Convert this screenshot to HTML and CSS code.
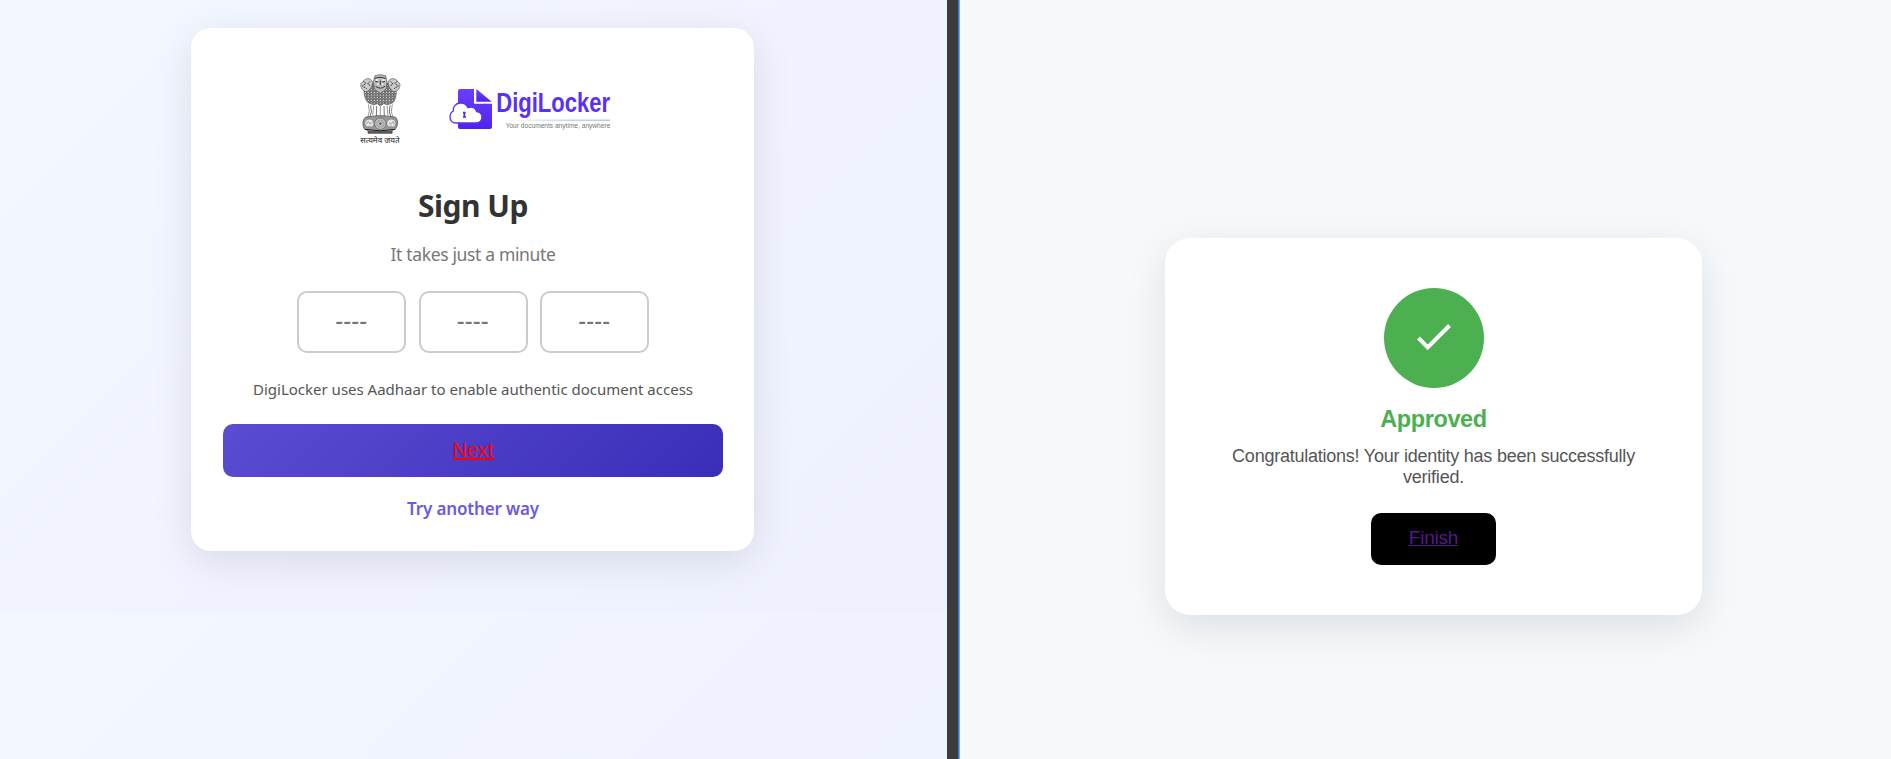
FILE: index.html
```html
<!DOCTYPE html>
<html lang="en">
<head>
<meta charset="utf-8">
<title>DigiLocker Sign Up</title>
<link rel="stylesheet" href="styles.css">
</head>
<body>
<main class="split">
  <section class="pane pane-signup">
    <div class="card signup">
      <div class="logos">
        <svg class="emblem" viewBox="0 0 240 270" role="img" aria-label="National emblem">
          <defs>
            <pattern id="fur" width="9" height="8" patternUnits="userSpaceOnUse">
              <rect width="9" height="8" fill="#999"/>
              <path d="M0 0l4 5 5-5M0 8l4-3M5 5l4 3" stroke="#333" stroke-width="1.5" fill="none"/>
              <circle cx="4" cy="1" r="1.8" fill="#eee"/>
            </pattern>
          </defs>
          <g stroke="#555" stroke-width="2">
            <path fill="url(#fur)" d="M74 78c-4 16-2 36 10 50l16 6 12-3 9 7 10-7 12 3 16-6c11-14 12-34 7-50l-18-8H92z"/>
            <path fill="#ccc" d="M82 56c-8 1-10 6-15 10-6 5-6 12-3 16 1 8 9 13 17 13 9-5 16-15 17-28-3-8-9-12-16-11zM160 56c8 1 10 6 15 10 6 5 6 12 3 16-1 8-9 13-17 13-9-5-16-15-17-28 3-8 9-12 16-11z"/>
            <path fill="#bbb" d="M105 47q16-6 32 0l4 18-3 23-17 12-17-12-4-23z"/>
          </g>
          <path d="M104 55q16-7 33 0M106 64l9 2m20-2l-9 2M121 62v13M107 79q14 11 28 0" stroke="#333" stroke-width="3" fill="none"/>
          <path d="M108 60h7M127 60h7M112 72h5M125 72h5" stroke="#fff" stroke-width="4"/>
          <path d="M70 64l8 6-11 8 13 8M90 64l-7 8 9 6M172 64l-8 6 11 8-13 8M152 64l7 8-9 6" stroke="#333" stroke-width="3" fill="none" stroke-dasharray="5 2"/>
          <path d="M85 133l3 22-5 17M101 137l-3 28M121 138v34M141 137l3 28M157 133l-3 22 5 17" stroke="#999" stroke-width="3" fill="none"/>
          <path d="M92 136l2 20-5 15M110 138l-1 32M132 138l1 32M150 136l-2 20 5 15" stroke="#333" stroke-width="2" fill="none"/>
          <path d="M76 172q45-10 91 0c8 8 7 28-2 36l-9 3v9H84v-9l-10-3c-7-8-7-28 2-36z" fill="#999" stroke="#333" stroke-width="2"/>
          <ellipse cx="88" cy="190" rx="14" ry="13" fill="#e5e5e5" stroke="#666" stroke-width="2"/>
          <ellipse cx="154" cy="190" rx="14" ry="13" fill="#e5e5e5" stroke="#666" stroke-width="2"/>
          <path d="M79 193l6-8 6 7 7-5M147 188l6 5 6-8 5 8M82 199h10M148 199h10" stroke="#777" stroke-width="2" fill="none"/>
          <circle cx="121" cy="191" r="17" fill="#ccc" stroke="#555" stroke-width="2"/>
          <circle cx="121" cy="191" r="10" fill="none" stroke="#888" stroke-width="6" stroke-dasharray="2 2"/>
          <circle cx="121" cy="191" r="4" fill="#666"/>
          <path d="M75 208q46 9 91 0M84 216h73" stroke="#222" stroke-width="3" fill="none"/>
          <text class="motto" x="61" y="248" textLength="118" lengthAdjust="spacingAndGlyphs">सत्यमेव जयते</text>
        </svg>
        <svg class="brand" viewBox="0 0 540 195" role="img" aria-label="DigiLocker">
          <defs>
            <linearGradient id="violet" x1="0" y1="0" x2="0" y2="1">
              <stop offset="0" stop-color="#6a40ff"/><stop offset="1" stop-color="#5122ee"/>
            </linearGradient>
            <linearGradient id="rule" x1="0" x2="1" y1="0" y2="0">
              <stop offset="0" stop-color="#a9bfe6" stop-opacity="0"/><stop offset=".6" stop-color="#a9bfe6"/><stop offset="1" stop-color="#8fb0c8"/>
            </linearGradient>
          </defs>
          <path fill="url(#violet)" d="M60 42h42v44h54v70q0 6-6 6H60q-6 0-6-6V48q0-6 6-6z"/>
          <path fill="url(#violet)" d="M109 42l46 38h-46z"/>
          <path fill="#fff" stroke="#5b31f5" stroke-width="4" d="M48 144c-11 0-18-8-18-18 0-9 4-15 10-18-2-12 7-23 20-24 12-1 20 5 24 14 12-5 24 0 26 12 10 1 16 8 16 17 0 10-8 17-18 17z"/>
          <path d="M69 113h8M73 113v13M69 126h9" stroke="#5427f0" stroke-width="5"/>
          <text class="brand-name" x="169" y="110" textLength="341" lengthAdjust="spacingAndGlyphs" fill="#5a30f5">DigiLocker</text>
          <rect x="195" y="134" width="315" height="3" fill="url(#rule)"/>
          <text class="brand-tag" x="197" y="158" textLength="314" lengthAdjust="spacingAndGlyphs">Your documents anytime, anywhere</text>
        </svg>
      </div>
      <h1 class="signup-title">Sign Up</h1>
      <p class="signup-sub">It takes just a minute</p>
      <div class="digits">
        <span class="digit-box">----</span>
        <span class="digit-box">----</span>
        <span class="digit-box">----</span>
      </div>
      <p class="signup-note">DigiLocker uses Aadhaar to enable authentic document access</p>
      <div class="next-btn"><a class="next-link">Next</a></div>
      <a class="alt-link">Try another way</a>
    </div>
  </section>
  <div class="divider"></div>
  <section class="pane pane-done">
    <div class="card done">
      <svg class="check" viewBox="0 0 100 100"><circle cx="50" cy="50" r="50" fill="#4caf50"/><path d="M34.5 50L43.7 59.5L65.5 37.5" fill="none" stroke="#fff" stroke-width="4"/></svg>
      <h2 class="done-title">Approved</h2>
      <p class="done-text">Congratulations! Your identity has been successfully verified.</p>
      <div class="finish-btn"><a class="finish-link">Finish</a></div>
    </div>
  </section>
</main>
</body>
</html>
```
FILE: styles.css
```css
* { box-sizing: border-box; }
body { margin: 0; overflow: hidden; }
h1, h2, p { margin: 0; }

.split { display: flex; width: 1891px; height: 759px; }
.pane { display: flex; justify-content: center; }
.pane-signup {
  width: 947px;
  padding: 28px 2px 0 0;
  align-items: flex-start;
  background: linear-gradient(135deg, #f3f7ff, #eef0ff) 0 0 / 100% 613px repeat-y;
  font-family: "Noto Sans", "Open Sans", sans-serif;
}
.divider { width: 12px; background: #3b3b3b; border-right: 1px solid #2f75f0; }
.pane-done {
  flex: 1;
  padding-top: 238px;
  padding-left: 17px;
  align-items: flex-start;
  background: #f5f9fc;
  box-shadow: inset 1px 0 #6fa3f8;
  font-family: "Liberation Sans", Arial, sans-serif;
}

.card {
  display: flex;
  flex-direction: column;
  align-items: center;
  background: #fff;
  text-align: center;
  white-space: nowrap;
}
.signup {
  width: 563px;
  height: 523px;
  padding: 32px 31px 0 32px;
  border-radius: 20px;
  box-shadow: 0 10px 40px rgba(0, 0, 0, .1);
}
.logos { display: flex; gap: 20px; height: 90px; margin-left: 13px; }
.emblem { width: 80px; height: 90px; }
.brand { width: 180px; height: 65px; margin-top: 15px; overflow: visible; }
.motto { font: 24px "Noto Sans", sans-serif; fill: #222; }
.brand-name { font: bold 82px "Liberation Sans", Arial, sans-serif; }
.brand-tag { font: 23px "Liberation Sans", Arial, sans-serif; fill: #777; }

.signup-title { margin-top: 34px; font-size: 30px; line-height: 43px; letter-spacing: -.5px; color: #333; }
.signup-sub { margin-top: 14px; font-size: 17.5px; line-height: 26px; letter-spacing: -.35px; color: #777; }
.digits { display: flex; gap: 12.5px; margin-top: 24px; }
.digit-box {
  width: 109px;
  height: 62px;
  border: 2px solid #ccc;
  border-radius: 10px;
  font-size: 23px;
  font-weight: 500;
  line-height: 55px;
  letter-spacing: .6px;
  color: #757575;
}
.signup-note { margin-top: 23px; font-size: 15px; line-height: 26px; color: #555; }
.next-btn {
  width: 500px;
  height: 53px;
  margin-top: 22px;
  border-radius: 10px;
  background: linear-gradient(135deg, #5b4dd2, #3a2db8);
  font: 20px/52px "Liberation Sans", Arial, sans-serif;
}
.next-link { color: #f00; text-decoration: underline; text-decoration-thickness: 2px; text-decoration-skip-ink: none; }
.alt-link { margin-top: 19px; font-size: 17px; font-weight: 600; line-height: 26px; letter-spacing: -.15px; color: #6a5be0; }

.done {
  width: 537px;
  height: 377px;
  padding-top: 50px;
  border-radius: 25px;
  box-shadow: 0 12px 40px rgba(0, 0, 0, .1);
}
.check { width: 100px; height: 100px; }
.done-title { margin-top: 17px; font-size: 23.5px; line-height: 28px; letter-spacing: -.4px; color: #4caf50; }
.done-text { width: 437px; margin-top: 13px; white-space: normal; font-size: 18px; line-height: 21px; letter-spacing: -.24px; color: #555; }
.finish-btn {
  width: 125px;
  height: 52px;
  margin-top: 25px;
  border-radius: 10px;
  background: #000;
  font-size: 19px;
  line-height: 50px;
  letter-spacing: -.2px;
}
.finish-link { color: #551a8b; text-decoration: underline; }
```
